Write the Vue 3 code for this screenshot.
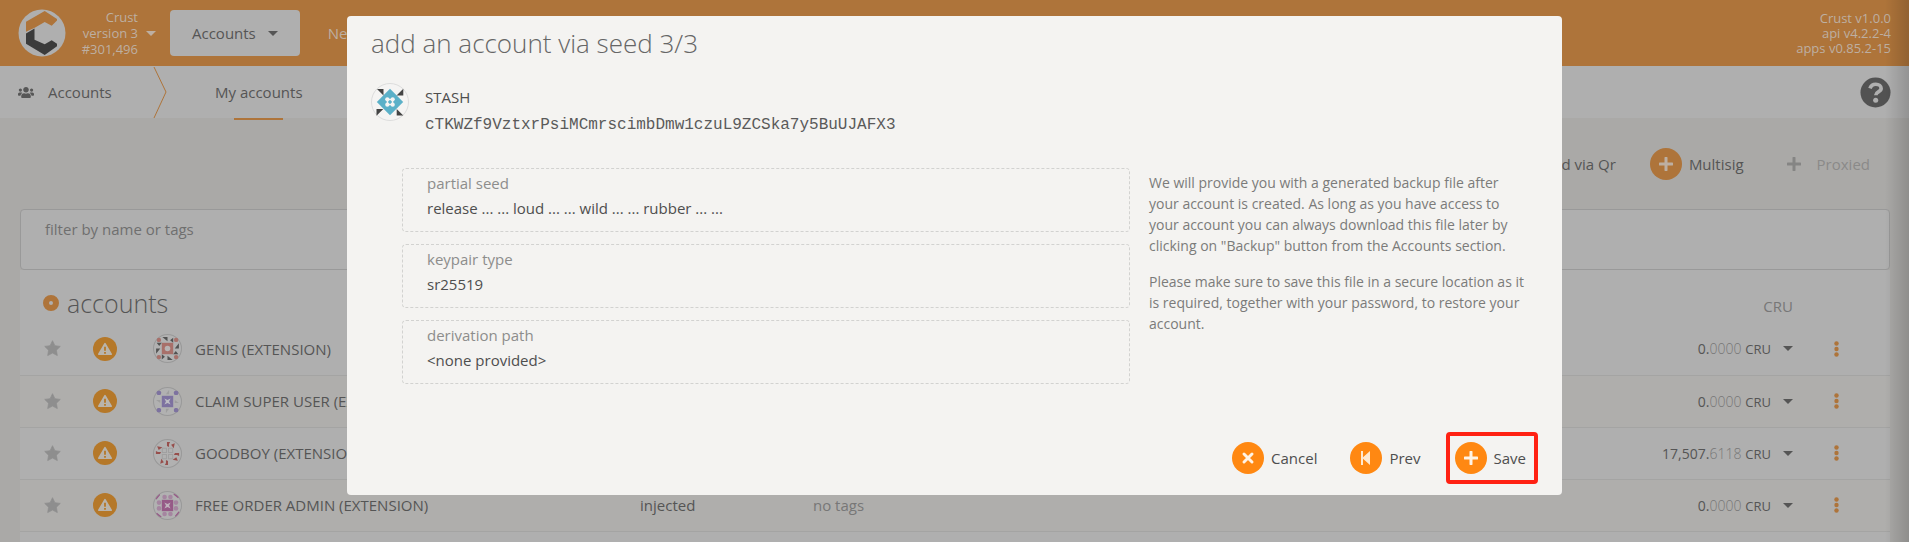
<script setup>
const rows = [
  { name: 'GENIS (EXTENSION)', whole: '0.', part: '0000', art: 'genis' },
  { name: 'CLAIM SUPER USER (EXTENSION)', whole: '0.', part: '0000', art: 'claim' },
  { name: 'GOODBOY (EXTENSION)', whole: '17,507.', part: '6118', art: 'goodboy' },
  { name: 'FREE ORDER ADMIN (EXTENSION)', whole: '0.', part: '0000', art: 'free' }
]
const quarters = [0, 90, 180, 270]
const details = [
  { label: 'partial seed', value: 'release ... ... loud ... ... wild ... ... rubber ... ...' },
  { label: 'keypair type', value: 'sr25519' },
  { label: 'derivation path', value: '<none provided>' }
]
</script>

<template>
  <div class="page">
    <header class="topbar">
      <svg class="logo" viewBox="0 0 48 48" aria-label="Crust">
        <circle cx="24" cy="24" r="23.5" fill="#afafaf" />
        <path d="M8 12.7 26.7 2 39 10v1.5l-5.3 5.200-7-3.700-10 5.700L8 22.700z" fill="#ae743a" />
        <path d="M8 24.500l8.500-5v11.200l10.200 4.600 7-4 5.300 3.500v2.500L26.700 46 8 34.700z" fill="#3b3b3b" />
      </svg>
      <button class="chain" type="button">
        <span>Crust<br />version 3<br />#301,496</span>
        <i class="caret"></i>
      </button>
      <button class="tab tab-active" type="button">Accounts <i class="caret"></i></button>
      <button class="tab" type="button">Network</button>
      <p class="versions">Crust v1.0.0<br />api v4.2.2-4<br />apps v0.85.2-15</p>
    </header>

    <nav class="subnav">
      <svg class="users" viewBox="0 0 640 512" aria-hidden="true">
        <path fill="#565656" d="M96 224c35.300 0 64-28.700 64-64s-28.700-64-64-64-64 28.700-64 64 28.700 64 64 64zm448 0c35.300 0 64-28.700 64-64s-28.700-64-64-64-64 28.700-64 64 28.700 64 64 64zm32 32h-64c-17.600 0-33.500 7.100-45.100 18.600 40.300 22.100 68.900 62 75.100 109.400h66c17.700 0 32-14.300 32-32v-32c0-35.300-28.700-64-64-64zm-256 0c61.900 0 112-50.100 112-112S381.900 32 320 32 208 82.100 208 144s50.100 112 112 112zm76.800 32h-8.300c-20.800 10-43.900 16-68.500 16s-47.600-6-68.500-16h-8.300C179.600 288 128 339.600 128 403.200V432c0 26.500 21.500 48 48 48h288c26.500 0 48-21.500 48-48v-28.800c0-63.600-51.600-115.200-115.200-115.200zm-223.700-13.400C161.500 263.100 145.600 256 128 256H64c-35.300 0-64 28.700-64 64v32c0 17.700 14.300 32 32 32h65.900c6.300-47.400 34.900-87.300 75.200-109.400z" />
      </svg>
      <span class="section">Accounts</span>
      <svg class="divider" viewBox="0 0 16 52" aria-hidden="true">
        <path d="M1 1l12 25L1 52" fill="none" stroke="#ae743a" />
      </svg>
      <a class="current" href="#accounts">My accounts</a>
      <button class="help" type="button" aria-label="Help">
        <svg viewBox="0 0 32 32">
          <circle cx="16" cy="16" r="15.500" fill="#525252" />
          <path d="M10.300 11.800c1-3 3.200-4.300 6-4.300 3.200 0 5.500 1.700 5.500 4.400 0 3.600-5.400 3.400-5.400 6.600v.4" fill="none" stroke="#afafaf" stroke-width="3.800" />
          <circle cx="16.200" cy="24" r="2.600" fill="#afafaf" />
        </svg>
      </button>
    </nav>

    <main class="content">
      <div class="actions">
        <button class="act" type="button"><span class="disc"><svg viewBox="0 0 14 14"><path d="M7 1v12M1 7h12" /></svg></span>Add via Qr</button>
        <button class="act" type="button"><span class="disc"><svg viewBox="0 0 14 14"><path d="M7 1v12M1 7h12" /></svg></span>Multisig</button>
        <button class="act off" type="button" disabled><span class="disc"><svg viewBox="0 0 14 14"><path d="M7 1v12M1 7h12" /></svg></span>Proxied</button>
      </div>

      <label class="filter">
        <span>filter by name or tags</span>
        <input type="text" />
      </label>

      <div class="panel">
        <table class="accounts">
          <colgroup>
            <col class="c-star" /><col class="c-warn" /><col class="c-name" /><col class="c-type" /><col /><col class="c-bal" /><col class="c-more" />
          </colgroup>
          <thead>
            <tr>
              <th colspan="5"><h1><i class="ring"></i>accounts</h1></th>
              <th class="unit">CRU</th>
              <th></th>
            </tr>
          </thead>
          <tbody>
            <tr v-for="row in rows" :key="row.name">
              <td class="star">
                <svg viewBox="0 0 24 24"><path d="M12 1l3.400 7 7.600 1-5.500 5.400 1.300 7.600L12 18.400 5.200 22l1.300-7.600L1 9l7.600-1z" fill="#8e8e8e" stroke="#8e8e8e" stroke-linejoin="round" /></svg>
              </td>
              <td class="warn">
                <svg viewBox="0 0 24 24">
                  <circle cx="12" cy="12" r="12" fill="#b57829" />
                  <path d="M12 6.600l6.200 10.600H5.800z" fill="#b9b4ac" stroke="#b9b4ac" stroke-width="1.600" stroke-linejoin="round" />
                  <path d="M12 9.700v4M12 15v1.800" stroke="#b57829" stroke-width="1.800" />
                </svg>
              </td>
              <td>
                <div class="who">
                  <svg class="mini" viewBox="0 0 28 28" aria-hidden="true">
                    <circle cx="14" cy="14" r="13.500" fill="#b1b1b1" stroke="#999" />
                    <g v-if="row.art === 'genis'">
                      <path d="M8.500 8.500h11v11h-11z" fill="#a8706a" />
                      <circle cx="14" cy="14" r="2.700" fill="#b8b4b4" />
                      <g v-for="q in quarters" :key="q" :transform="`rotate(${q} 14 14)`">
                        <circle cx="5.700" cy="5.700" r="2.100" fill="#a8706a" />
                        <path d="M9 3h5v4zM19.500 3.500v5l-3-2.500z" fill="#525252" />
                      </g>
                    </g>
                    <g v-else-if="row.art === 'claim'">
                      <path d="M8.500 8.500h11v11h-11z" fill="#7d72a0" />
                      <path d="M11 11l3 1.500 3-1.500-1.500 3 1.500 3-3-1.500-3 1.500 1.500-3z" fill="#bdbdc4" />
                      <g v-for="q in quarters" :key="q" :transform="`rotate(${q} 14 14)`">
                        <rect x="3.600" y="3.600" width="4.200" height="4.200" rx="1.500" fill="#7d72a0" />
                        <path d="M12.500 7l3-4v4z" fill="#9e9e9e" />
                      </g>
                    </g>
                    <g v-else-if="row.art === 'goodboy'">
                      <path d="M9 9h4v4H9zM15 9h4v4h-4zM9 15h4v4H9zM15 15h4v4h-4z" fill="none" stroke="#a0a0a0" />
                      <g v-for="q in quarters" :key="q" :transform="`rotate(${q} 14 14)`" fill="#974f4c">
                        <path d="M13.500 2.800h3l-1 2v3l-2-1zM4 7l5 1-3.500 2.500z" />
                      </g>
                    </g>
                    <g v-else>
                      <path d="M8.500 8.500h11v11h-11z" fill="#965a87" />
                      <path d="M11 11l3 1.500 3-1.500-1.500 3 1.500 3-3-1.500-3 1.500 1.500-3z" fill="#c0b2bd" />
                      <g v-for="q in quarters" :key="q" :transform="`rotate(${q} 14 14)`" fill="#a585a0">
                        <circle cx="11.200" cy="5.800" r="2.200" />
                        <circle cx="16.800" cy="5.800" r="2.200" />
                        <path d="M3 8L6.500 3.500 4 6z" stroke="#965a87" />
                      </g>
                    </g>
                  </svg>
                  {{ row.name }}
                </div>
              </td>
              <td>injected</td>
              <td class="tags">no tags</td>
              <td class="balance"><b>{{ row.whole }}</b><span>{{ row.part }}</span> <small>CRU</small><i class="caret"></i></td>
              <td class="more">
                <button type="button" aria-label="Account actions">
                  <svg viewBox="0 0 5 16"><circle cx="2.500" cy="2.500" r="2.200" /><circle cx="2.500" cy="8" r="2.200" /><circle cx="2.500" cy="13.500" r="2.200" /></svg>
                </button>
              </td>
            </tr>
          </tbody>
        </table>
      </div>
    </main>
    <div class="edge"></div>

    <div class="overlay">
      <section class="modal" role="dialog" aria-labelledby="modal-title">
        <h2 id="modal-title">add an account via seed 3/3</h2>
        <div class="identity">
          <svg class="avatar" viewBox="0 0 38 38" aria-hidden="true">
            <circle cx="19" cy="19" r="18.500" fill="#f5f4f3" stroke="#dcdcdc" />
            <path d="M19 5.800L32.200 19 19 32.200 5.800 19z" fill="#5bb0c8" />
            <path d="M6 6h6.500v6.500zM32.300 5.700v6.800h-6.800zM5.500 26h6.800l-6.800 6.800zM25.700 26l6.600 6.600h-6.600z" fill="#444" />
            <path d="M16.500 16.500h5v5h-5z" fill="none" stroke="#f5f4f3" stroke-width="1.500" />
            <g fill="#f5f4f3">
              <circle cx="16.300" cy="16.300" r="2.100" /><circle cx="21.700" cy="16.300" r="2.100" />
              <circle cx="16.300" cy="21.700" r="2.100" /><circle cx="21.700" cy="21.700" r="2.100" />
            </g>
          </svg>
          <div>
            <p class="name">STASH</p>
            <p class="address">cTKWZf9VztxrPsiMCmrscimbDmw1czuL9ZCSka7y5BuUJAFX3</p>
          </div>
        </div>
        <div class="columns">
          <dl class="details">
            <div v-for="item in details" :key="item.label" class="detail">
              <dt>{{ item.label }}</dt>
              <dd>{{ item.value }}</dd>
            </div>
          </dl>
          <aside class="notes">
            <p>We will provide you with a generated backup file after your account is created. As long as you have access to your account you can always download this file later by clicking on "Backup" button from the Accounts section.</p>
            <p>Please make sure to save this file in a secure location as it is required, together with your password, to restore your account.</p>
          </aside>
        </div>
        <footer class="buttons">
          <button type="button"><span class="disc bright"><svg viewBox="0 0 14 14"><path d="M3 3l8 8M11 3l-8 8" /></svg></span>Cancel</button>
          <button type="button"><span class="disc bright"><svg viewBox="0 0 14 14"><path class="solid" d="M2 0h2v6.300L11 0v14L4 7.700V14H2z" /></svg></span>Prev</button>
          <button class="marked" type="button"><span class="disc bright"><svg viewBox="0 0 14 14"><path d="M7 1v12M1 7h12" /></svg></span>Save</button>
        </footer>
      </section>
    </div>
  </div>
</template>

<style>
body {
  margin: 0;
}
</style>

<style scoped>
* {
  box-sizing: border-box;
}
.page {
  position: relative;
  display: flex;
  flex-direction: column;
  height: 100vh;
  overflow: hidden;
  background: #aaa9a7;
  color: #555;
  font: 15px/20px "Open Sans", "Noto Sans", sans-serif;
}
p, h1, h2, dl, dd {
  margin: 0;
}
button {
  padding: 0;
  border: 0;
  background: none;
  color: inherit;
  font: inherit;
  cursor: pointer;
}
svg {
  display: block;
  flex: none;
}
.caret {
  display: inline-block;
  border: 5px solid transparent;
  border-top-color: currentColor;
  border-bottom: 0;
}
.topbar {
  display: flex;
  flex: none;
  align-items: center;
  height: 66px;
  padding: 0 18px;
  background: #ae743a;
  color: #bdafa2;
}
.logo {
  width: 48px;
  height: 48px;
}
.chain {
  display: flex;
  align-items: center;
  gap: 8px;
  width: 90px;
  margin-right: 14px;
  justify-content: flex-end;
  font-size: 13px;
  line-height: 16px;
  text-align: right;
}
.tab {
  display: flex;
  align-items: center;
  gap: 12px;
  height: 46px;
  padding: 0 22px;
  margin-right: 6px;
  border-radius: 4px;
}
.tab-active {
  background: #afafaf;
  color: #555;
}
.versions {
  margin-left: auto;
  font-size: 13px;
  line-height: 15px;
  text-align: right;
}
.subnav {
  display: flex;
  flex: none;
  align-items: center;
  height: 52px;
  padding: 0 18px;
  background: #afafaf;
}
.users {
  width: 16px;
  height: 13px;
  margin-right: 14px;
}
.section {
  width: 105px;
}
.divider {
  width: 16px;
  height: 52px;
}
.current {
  display: flex;
  align-items: center;
  position: relative;
  height: 52px;
  margin-left: 46px;
  color: inherit;
  text-decoration: none;
}
.current::after {
  content: "";
  position: absolute;
  left: 22%;
  right: 22%;
  bottom: -2px;
  height: 2px;
  background: #ae743a;
}
.help {
  margin-left: auto;
}
.help svg {
  width: 31px;
  height: 31px;
}
.content {
  display: flex;
  flex: 1;
  flex-direction: column;
  padding: 0 19px 0 20px;
}
.actions {
  display: flex;
  flex: none;
  justify-content: flex-end;
  gap: 34px;
  height: 91px;
  padding: 0 20px 0 0;
}
.act {
  display: flex;
  align-items: center;
  gap: 7px;
}
.act.off {
  color: #8a8a89;
}
.disc {
  display: grid;
  place-items: center;
  width: 32px;
  height: 32px;
  border-radius: 50%;
  background: #ae743a;
}
.disc svg {
  width: 14px;
  height: 14px;
}
.disc path {
  fill: none;
  stroke: #bdafa2;
  stroke-width: 3;
  stroke-linecap: round;
}
.act.off .disc {
  background: none;
}
.act.off .disc path {
  stroke: #858584;
}
.disc.bright {
  background: #ff8812;
}
.disc.bright path {
  stroke: #fff3e6;
}
.disc.bright .solid {
  fill: #ffe9d1;
  stroke: none;
}
.filter {
  display: block;
  flex: none;
  height: 61px;
  padding: 9px 24px;
  border: 1px solid #999;
  border-radius: 4px;
  background: #afafaf;
  color: #6f6f6f;
}
.filter span,
.filter input {
  display: block;
  width: 100%;
}
.filter input {
  height: 18px;
  padding: 0;
  border: 0;
  outline: 0;
  background: none;
  font: inherit;
}
.panel {
  flex: 1;
  background: #afafaf;
}
.accounts {
  width: 100%;
  border-collapse: collapse;
  table-layout: fixed;
}
.c-star { width: 48px; }
.c-warn { width: 85px; }
.c-name { width: 487px; }
.c-type { width: 173px; }
.c-bal { width: 250px; }
.c-more { width: 97px; }
th {
  height: 53px;
  padding: 12px 0 0;
  font-weight: 400;
  text-align: left;
}
h1 {
  display: flex;
  align-items: center;
  gap: 8px;
  margin-left: 23px;
  font-size: 25px;
  font-weight: 300;
  line-height: 36px;
}
.ring {
  width: 16px;
  height: 16px;
  border: 6px solid #ae743a;
  border-radius: 50%;
}
.unit {
  padding-top: 18px;
  color: #777;
  text-align: right;
}
td {
  height: 52px;
  padding: 0;
  border-bottom: 1px solid #a4a4a3;
}
tbody tr:nth-child(even) {
  background: #afaeac;
}
.star svg {
  width: 17px;
  height: 17px;
  margin-left: 24px;
}
.warn svg {
  width: 24px;
  height: 24px;
  margin-left: 25px;
}
.who {
  display: flex;
  align-items: center;
  gap: 13px;
  white-space: nowrap;
}
.mini {
  width: 29px;
  height: 29px;
}
.tags {
  color: #777;
}
.balance {
  text-align: right;
}
.balance b {
  font-size: 14px;
  font-weight: 400;
}
.balance span {
  color: #777;
  font-size: 14px;
  font-weight: 300;
}
.balance small {
  font-size: 13px;
}
.balance .caret {
  margin: 0 0 3px 12px;
}
.more button {
  display: block;
  margin-left: 41px;
}
.more svg {
  width: 5px;
  height: 16px;
  fill: #ae743a;
}
.edge {
  position: absolute;
  top: 0;
  right: 0;
  bottom: 0;
  width: 24px;
  background: linear-gradient(to right, transparent, rgba(0, 0, 0, 0.16));
}
.overlay {
  position: absolute;
  inset: 0;
  display: flex;
  align-items: flex-start;
  justify-content: center;
  padding-top: 16px;
}
.modal {
  width: 1215px;
  max-width: 94%;
  padding: 7px 24px 21px;
  border-radius: 4px;
  background: #f4f3f1;
  color: #4e4e4e;
}
h2 {
  color: #666;
  font-size: 26px;
  font-weight: 300;
  line-height: 40px;
}
.identity {
  display: flex;
  gap: 16px;
  margin-top: 20px;
}
.avatar {
  width: 38px;
  height: 38px;
}
.name {
  margin-top: 4px;
}
.address {
  margin-top: 6px;
  color: #5a5a5a;
  font: 16px/24px "Liberation Mono", monospace;
}
.columns {
  display: grid;
  grid-template-columns: 728fr 389fr;
  gap: 19px;
  margin-top: 31px;
  padding-left: 31px;
}
.details {
  display: grid;
  align-content: start;
  gap: 12px;
}
.detail {
  height: 64px;
  padding: 2px 24px;
  border: 1px dashed #d2d2d0;
  border-radius: 4px;
}
dt {
  color: #8d8d8c;
  line-height: 25px;
}
dd {
  line-height: 25px;
}
.notes {
  padding: 4px 11px 0 0;
  color: #7b7b7a;
  font-size: 14px;
  line-height: 21px;
}
.notes p + p {
  margin-top: 15px;
}
.buttons {
  display: flex;
  justify-content: flex-end;
  gap: 33px;
  margin-top: 58px;
}
.buttons button {
  display: flex;
  align-items: center;
  gap: 7px;
}
.buttons .marked {
  margin: -10px 0 -10px -8px;
  padding: 6px 8px 6px 5px;
  border: 4px solid #ff2113;
  border-radius: 4px;
}
</style>
